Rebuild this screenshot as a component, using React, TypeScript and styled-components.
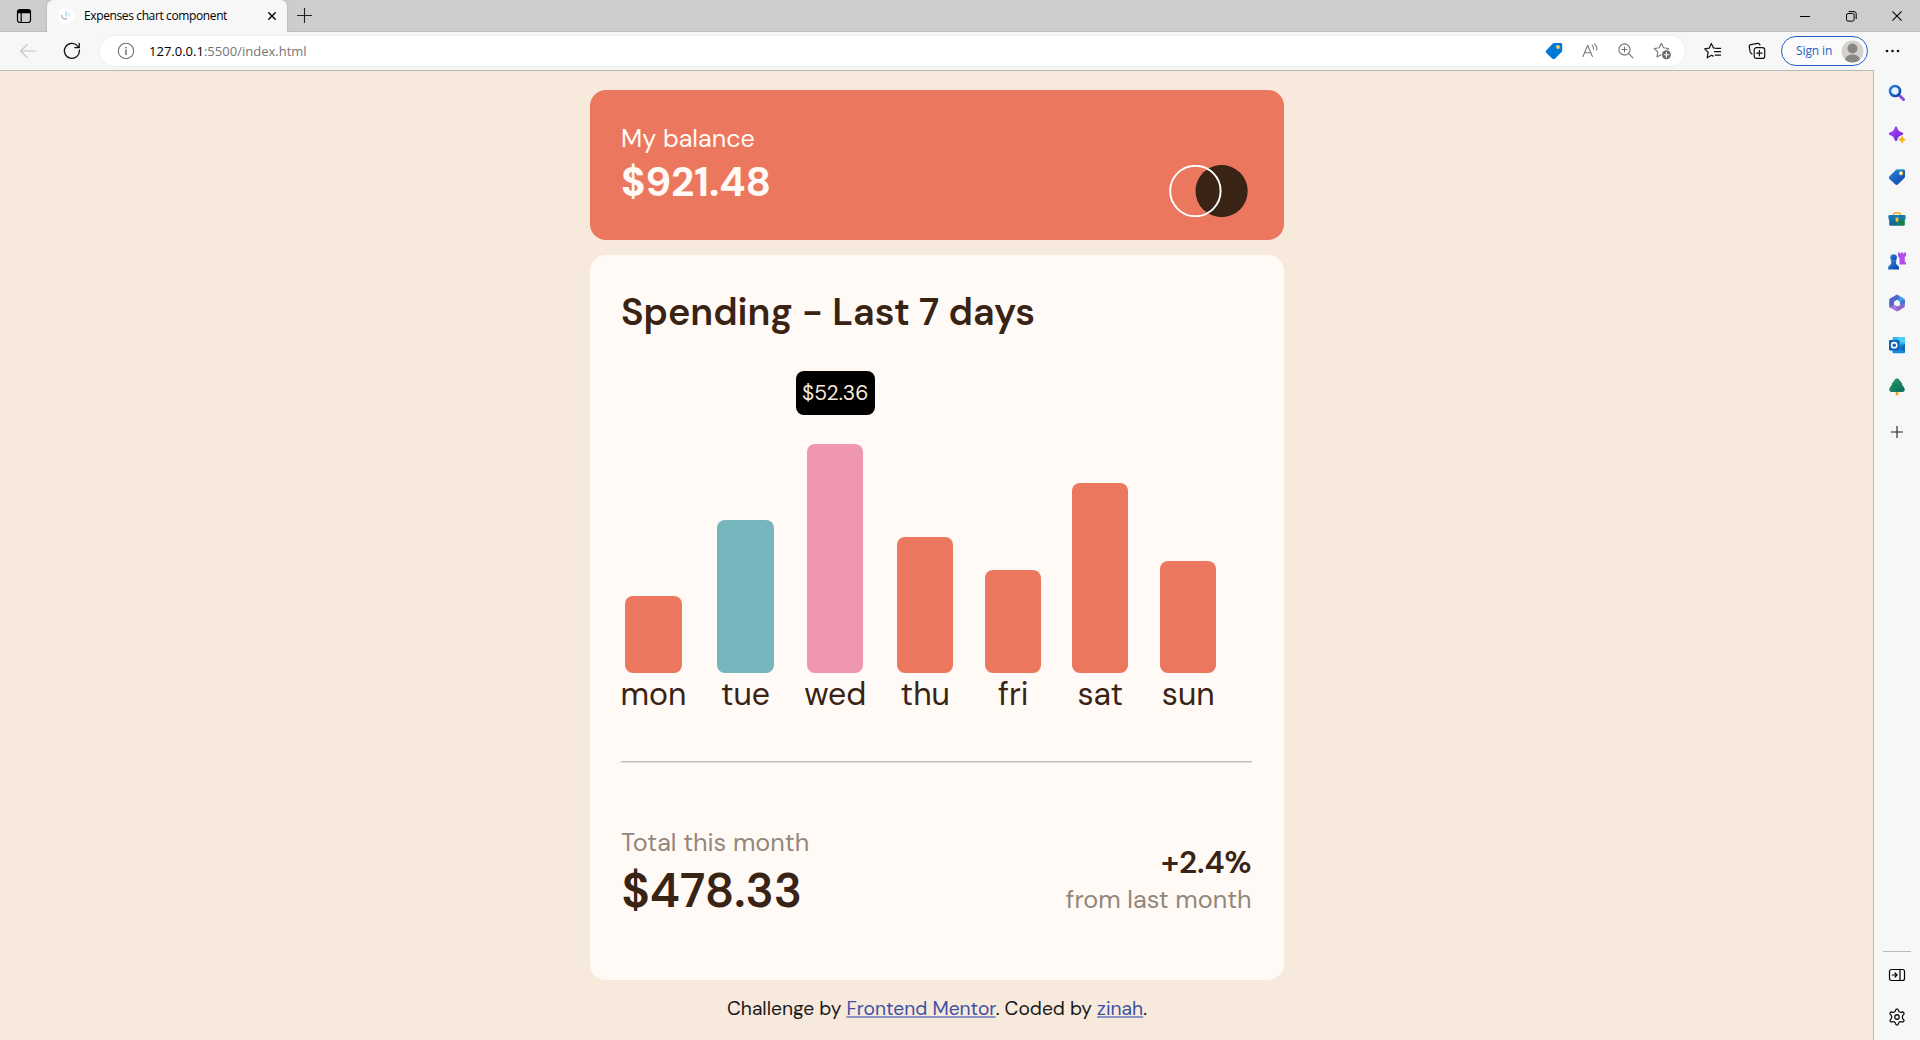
import React from "react";
import styled, { createGlobalStyle } from "styled-components";

const color = {
  orange: "#ec775f",
  cyan: "#76b5bc",
  pink: "#ef97b0",
  dark: "#382314",
  medium: "#93867b",
  cream: "#f7e9dc",
  pale: "#fffaf5",
  link: "#3e52a3",
};

const GlobalStyle = createGlobalStyle`
  *, *::before, *::after { box-sizing: border-box; }
  body { margin: 0; background: ${color.cream}; overflow: hidden; }
  svg { display: block; flex: none; }
`;

/* ---------- Browser frame ---------- */

const Window = styled.div`
  display: flex;
  flex-direction: column;
  width: 1920px;
  height: 1040px;
  font-family: "Open Sans", "Noto Sans", sans-serif;
  color: #111;
`;

const TabStrip = styled.div`
  display: flex;
  height: 32px;
  background: #cdcdcd;
  box-shadow: inset 0 -1px 0 #bdbdbd;
`;

const TabActions = styled.div`
  display: grid;
  place-items: center;
  width: 47px;
  padding: 0 0 0 1px;
`;

const Tab = styled.div`
  display: flex;
  align-items: center;
  width: 240px;
  padding: 0 8px 0 11px;
  background: #f7f7f7;
  border-radius: 6px 6px 0 0;
  box-shadow: 0 0 2px rgba(0, 0, 0, 0.25);
  clip-path: inset(0 -3px 0 -3px);
`;

const Favicon = styled.div`
  display: grid;
  place-items: center;
  width: 16px;
  height: 16px;
  border-radius: 50%;
  background: #fff;
`;

const TabTitle = styled.span`
  flex: 1;
  margin-left: 10px;
  font-size: 12px;
  line-height: 16px;
  letter-spacing: -0.38px;
  color: #000;
  white-space: nowrap;
`;

const IconSlot = styled.div<{ $size?: number }>`
  display: grid;
  place-items: center;
  width: ${(p) => p.$size ?? 32}px;
  height: 30px;
  flex: none;
`;

const WindowControls = styled.div`
  display: flex;
  align-items: center;
  margin-left: auto;
`;

const Toolbar = styled.div`
  display: flex;
  align-items: center;
  gap: 12px;
  height: 38px;
  padding: 0 12px;
  background: #f7f7f7;
`;

const AddressBar = styled.div`
  display: flex;
  align-items: center;
  flex: 1;
  height: 30px;
  padding: 0 5px 0 10px;
  border-radius: 15px;
  background: #fff;
  box-shadow: 0 0 3px rgba(0, 0, 0, 0.07);
`;

const Url = styled.span`
  flex: 1;
  margin-left: 7px;
  font-size: 13px;
  line-height: 18px;
  letter-spacing: 0.01px;
  color: #767676;

  b {
    font-weight: 400;
    color: #000;
  }
`;

const AccountGroup = styled.div`
  display: flex;
  align-items: center;
  gap: 8px;
  margin-left: -4px;
`;

const SignIn = styled.div`
  display: flex;
  align-items: center;
  justify-content: space-between;
  width: 87px;
  height: 30px;
  padding: 0 3px 0 14px;
  border: 1px solid #2260c9;
  border-radius: 15px;
  font-size: 12px;
  line-height: 16px;
  letter-spacing: -0.1px;
  color: #2260c9;
  background: #fbfbfb;
`;

const Body = styled.div`
  display: flex;
  flex: 1;
  background: #f7f7f7;
`;

const Page = styled.main`
  display: flex;
  flex-direction: column;
  align-items: center;
  flex: 1;
  padding: 19px 0 0 1px;
  border-top: 1px solid #b9b9b9;
  border-right: 1px solid #b9b9b9;
  background: ${color.cream};
  font-family: "DM Sans", Inter, sans-serif;
  color: ${color.dark};
`;

const Sidebar = styled.aside`
  display: flex;
  flex-direction: column;
  align-items: center;
  width: 46px;
  padding: 2px 0;
`;

const SidebarSlot = styled.div<{ $height?: number }>`
  display: grid;
  place-items: center;
  width: 46px;
  height: ${(p) => p.$height ?? 42}px;
`;

const SidebarRule = styled.div`
  width: 28px;
  height: 1px;
  margin: auto 0 2px;
  background: #b9b9b9;
`;

/* ---------- Cards ---------- */

const BalanceCard = styled.section`
  display: flex;
  justify-content: space-between;
  width: 694px;
  height: 150px;
  padding: 32.4px 36px 0 31px;
  border-radius: 16px;
  background: ${color.orange};
  color: ${color.pale};
`;

const BalanceLabel = styled.p`
  margin: 0;
  font-size: 25.2px;
  line-height: 34px;
`;

const BalanceValue = styled.p`
  margin: 0;
  font-size: 40.5px;
  font-weight: 700;
  line-height: 54px;
`;

const Logo = styled.svg`
  margin-top: 42.3px;
`;

const SpendingCard = styled.section`
  width: 694px;
  height: 725px;
  margin-top: 15px;
  padding: 34px 32px 0 31px;
  border-radius: 16px;
  background: ${color.pale};
`;

const Title = styled.h1`
  margin: 0;
  font-size: 37.8px;
  font-weight: 600;
  line-height: 48px;
`;

const Chart = styled.div`
  display: flex;
  align-items: flex-end;
  gap: 30.5px;
  height: 378px;
`;

const Day = styled.div<{ $width: number }>`
  display: flex;
  flex-direction: column;
  align-items: center;
  width: ${(p) => p.$width}px;
`;

const Bar = styled.div<{ $height: number; $color: string }>`
  position: relative;
  width: 56.4px;
  height: ${(p) => p.$height}px;
  border-radius: 8px;
  background: ${(p) => p.$color};
`;

const DayLabel = styled.span`
  font-size: 32px;
  line-height: 42px;
`;

const Tooltip = styled.div`
  position: absolute;
  left: 50%;
  top: -73px;
  width: 79.4px;
  height: 44px;
  margin-left: -39.7px;
  border-radius: 8px;
  background: #000;
  color: ${color.cream};
  font-size: 21px;
  line-height: 45px;
  text-align: center;
`;

const Rule = styled.hr`
  height: 2px;
  margin: 46px 0 0;
  border: 0;
  border-top: 1px solid #c2c0be;
  background: #e0dedb;
`;

const Summary = styled.div`
  display: flex;
  align-items: flex-end;
  justify-content: space-between;
  margin-top: 63px;
`;

const Muted = styled.p`
  margin: 0;
  font-size: 25.2px;
  line-height: 34px;
  color: ${color.medium};
`;

const Total = styled.p`
  margin: 0 0 0 0.5px;
  font-size: 47.3px;
  font-weight: 600;
  line-height: 62px;
`;

const Change = styled.div`
  padding: 0 0.5px 4.6px 0;
  text-align: right;
`;

const ChangeValue = styled.p`
  margin: 0;
  font-size: 31.5px;
  font-weight: 600;
  line-height: 40px;
`;

const Attribution = styled.footer`
  margin-top: 15px;
  font-size: 19.25px;
  line-height: 28px;
  color: #1a1a1a;

  a {
    color: ${color.link};
    text-decoration: underline;
    text-decoration-thickness: 1.5px;
    text-underline-offset: 0.5px;
    text-decoration-skip-ink: none;
    text-decoration-color: #8b93c4;
  }
`;

/* ---------- Data ---------- */

type DayData = {
  name: string;
  width: number;
  height: number;
  fill: string;
  amount?: string;
};

const days: DayData[] = [
  { name: "mon", width: 65, height: 77, fill: color.orange },
  { name: "tue", width: 58, height: 153, fill: color.cyan },
  { name: "wed", width: 60.5, height: 229, fill: color.pink, amount: "$52.36" },
  { name: "thu", width: 58.5, height: 136, fill: color.orange },
  { name: "fri", width: 56.5, height: 103, fill: color.orange },
  { name: "sat", width: 56.5, height: 190, fill: color.orange },
  { name: "sun", width: 58.5, height: 112, fill: color.orange },
];

/* ---------- Toolbar icons ---------- */

const line = { fill: "none", strokeLinecap: "round", strokeLinejoin: "round" } as const;

const TabActionsIcon = () => (
  <svg width="16" height="16" viewBox="0 0 16 16" {...line} stroke="#000" strokeWidth="1.2">
    <rect x="1.5" y="1.5" width="13" height="13" rx="2.5" />
    <path d="M2 2.5h12v2.2H2z" fill="#000" />
    <path d="M5.2 5v9" />
  </svg>
);

const FaviconMark = () => (
  <svg width="12" height="12" viewBox="0 0 12 12" {...line} strokeWidth="1.5">
    <path d="M1.6 5.6c.6 2.4 2.6 3.6 4.8 3.2" stroke="#b6b4dd" />
    <path d="M6.2 2v4" stroke="#a9dbe6" />
    <path d="M9.6 3.2 8.4 4.6l1.2 1.2" stroke="#c5e6ee" strokeWidth="1.1" />
  </svg>
);

const CloseIcon = ({ size = 8, weight = 1.4 }: { size?: number; weight?: number }) => (
  <svg width={size} height={size} viewBox="0 0 10 10" stroke="#000" strokeWidth={(weight * 10) / size}>
    <path d="M.4.4l9.2 9.2M9.6.4L.4 9.6" />
  </svg>
);

const PlusIcon = ({ size }: { size: number }) => (
  <svg width={size} height={size} viewBox={`0 0 ${size} ${size}`} stroke="#222" strokeWidth="1.1">
    <path d={`M${size / 2} 0v${size}M0 ${size / 2}h${size}`} />
  </svg>
);

const MinimiseIcon = () => (
  <svg width="10" height="10" viewBox="0 0 10 10" stroke="#000">
    <path d="M0 5.5h10" />
  </svg>
);

const RestoreIcon = () => (
  <svg width="11" height="11" viewBox="0 0 11 11" fill="none" stroke="#000">
    <rect x=".5" y="2.5" width="7.6" height="7.6" rx="1.5" />
    <path d="M2.7.6H8a2.2 2.2 0 0 1 2.2 2.2V8" />
  </svg>
);

const BackIcon = () => (
  <svg width="18" height="16" viewBox="0 0 18 16" {...line} stroke="#c4c4c4" strokeWidth="1.1">
    <path d="M16.5 8H1.6M8.2 1.4L1.6 8l6.6 6.6" />
  </svg>
);

const ReloadIcon = () => (
  <svg width="18" height="18" viewBox="0 0 18 18" {...line} stroke="#111" strokeWidth="1.3">
    <path d="M16.4 8.2A7.5 7.5 0 1 1 14.7 4.1L16 5.4" />
    <path d="M16.2 1.4v4.3h-4.4" />
  </svg>
);

const InfoIcon = () => (
  <svg width="18" height="18" viewBox="0 0 18 18" {...line} stroke="#707070" strokeWidth="1.1">
    <circle cx="9" cy="9" r="7.7" />
    <path d="M9 8v4.5" strokeWidth="1.5" />
    <circle cx="9" cy="5.6" r=".9" fill="#707070" stroke="none" />
  </svg>
);

const ShoppingTagIcon = () => (
  <svg width="18" height="18" viewBox="0 0 18 18">
    <path d="M9.4 1h6.400c.8 0 1.400.6 1.400 1.400v6c0 .6-.2 1.100-.6 1.500l-6.500 6.500c-.9.900-2.100.9-3 0L1.400 11c-.8-.8-.8-2 0-2.800L7.600 1.800C8.100 1.300 8.700 1 9.400 1z" fill="#0078d7" />
    <circle cx="13" cy="5" r="1.900" fill="#ffd94a" />
  </svg>
);

const ReadAloudIcon = () => (
  <svg width="18" height="18" viewBox="0 0 18 18" {...line} stroke="#7a7a7a" strokeWidth="1.1">
    <path d="M2 14.500L6.700 3.200 11.400 14.500M3.700 10.700h6" />
    <path d="M11.200 3.200c1 .9 1.400 2.200 1.300 4M13.500 1.800c1.700 1.500 2.700 3.600 2.200 6.400" />
  </svg>
);

const ZoomInIcon = () => (
  <svg width="18" height="18" viewBox="0 0 18 18" {...line} stroke="#707070" strokeWidth="1.1">
    <circle cx="7.5" cy="7.5" r="5.6" />
    <path d="M11.600 11.600l4.400 4.200M7.500 5v5M5 7.500h5" />
  </svg>
);

const AddFavouriteIcon = () => (
  <svg width="19" height="18" viewBox="0 0 19 18" {...line} stroke="#777" strokeWidth="1.1">
    <path d="M8.400 1.200l2.200 4.600 5 .7-3.600 3.400.9 5-4.500-2.400-4.400 2.400.8-5L1.200 6.500l5-.7z" />
    <circle cx="13.400" cy="12.800" r="5.200" fill="#fff" stroke="none" />
    <circle cx="13.400" cy="12.800" r="4.500" fill="#6b6b6b" stroke="none" />
    <path d="M13.400 10.400v4.800M11 12.800h4.800" stroke="#fff" />
  </svg>
);

const FavouritesIcon = () => (
  <svg width="18" height="18" viewBox="0 0 18 18" {...line} stroke="#111" strokeWidth="1.2">
    <path d="M10.800 6.200l-1.300-.2L7.300 1.600l-2.100 4.600-4.500.7 3.400 3.300-.9 5.600 4.400-2.500 1.500.8" />
    <path d="M11.800 6.300h4.800M10.500 9.700h6.100M11.200 13.100h5.400" />
  </svg>
);

const CollectionsIcon = () => (
  <svg width="18" height="18" viewBox="0 0 18 18" {...line} stroke="#111" strokeWidth="1.2">
    <rect x="6.200" y="5.700" width="10.500" height="10.700" rx="2.200" />
    <path d="M11.400 8.300v5.500M8.650 11.050h5.500" />
    <path d="M3.900 11.900C2.700 11.300 2.300 10.400 2 9.200L1.300 5.100c-.2-1.200.4-2.100 1.600-2.400l6.600-1.300c1.300-.2 2.100.3 2.500 1.600" />
  </svg>
);

const Avatar = () => (
  <svg width="23" height="23" viewBox="0 0 23 23">
    <defs>
      <clipPath id="avatar-disc">
        <circle cx="11.500" cy="11.500" r="11" />
      </clipPath>
    </defs>
    <g clipPath="url(#avatar-disc)">
      <rect width="23" height="23" fill="#d4d2d0" />
      <circle cx="11.500" cy="8.500" r="5" fill="#8a8783" />
      <ellipse cx="11.500" cy="19.200" rx="7.300" ry="4.700" fill="#8a8783" />
    </g>
  </svg>
);

const MoreIcon = () => (
  <svg width="15" height="4" viewBox="0 0 15 4" fill="#111">
    <circle cx="2" cy="2" r="1.350" />
    <circle cx="7.500" cy="2" r="1.350" />
    <circle cx="13" cy="2" r="1.350" />
  </svg>
);

/* ---------- Sidebar icons ---------- */

const SidebarGradients = () => (
  <svg width="0" height="0">
    <defs>
      <linearGradient id="blue" x1="0" y1="0" x2="1" y2="1">
        <stop offset="0" stopColor="#2f86df" />
        <stop offset="1" stopColor="#0a3fa6" />
      </linearGradient>
      <linearGradient id="violet" x1="0" y1="0" x2="1" y2="1">
        <stop offset="0" stopColor="#b14bf0" />
        <stop offset="1" stopColor="#6a20d8" />
      </linearGradient>
      <linearGradient id="case" x1="0" y1="0" x2="1" y2="0">
        <stop offset="0" stopColor="#1263b6" />
        <stop offset="1" stopColor="#12883a" />
      </linearGradient>
      <linearGradient id="tree" x1="0" y1="0" x2="1" y2="1">
        <stop offset="0" stopColor="#27a060" />
        <stop offset="1" stopColor="#0b6a63" />
      </linearGradient>
    </defs>
  </svg>
);

const SearchIcon = () => (
  <svg width="18" height="18" viewBox="0 0 18 18" fill="none">
    <path d="M11.500 11.500l4 4" stroke="#8a45dc" strokeWidth="3" strokeLinecap="round" />
    <circle cx="7" cy="7" r="5" stroke="url(#blue)" strokeWidth="2.600" fill="#e6f3fb" />
  </svg>
);

const DiscoverIcon = () => (
  <svg width="18" height="18" viewBox="0 0 18 18">
    <path d="M8 .4c.7 0 1 .4 1.200 1 .8 3 1.900 4.200 5 5.100.7.200 1.100.600 1.100 1.200s-.4 1-1.100 1.200c-3.100.9-4.200 2.200-5 5.200-.2.700-.5 1.100-1.200 1.100s-1-.4-1.200-1.100c-.8-3-1.900-4.300-5-5.200C1.100 8.700.7 8.300.7 7.700s.4-1 1.100-1.200c3.100-.9 4.200-2.100 5-5.100.2-.600.500-1 1.200-1z" fill="url(#violet)" />
    <path d="M14 10c.4 0 .6.200.7.600.4 1.400.8 1.900 2.300 2.300.4.100.7.300.7.700s-.3.600-.7.700c-1.500.4-1.900.9-2.300 2.400-.1.400-.3.700-.7.700s-.6-.3-.7-.7c-.4-1.500-.8-2-2.300-2.400-.4-.1-.7-.3-.7-.7s.3-.6.700-.7c1.500-.4 1.900-.9 2.300-2.300.1-.4.300-.6.700-.6z" fill="#f7b416" />
  </svg>
);

const TagIcon = () => (
  <svg width="18" height="18" viewBox="0 0 18 18">
    <path d="M9.400 1.400h6.200c.8 0 1.400.6 1.400 1.400v5.600c0 .6-.2 1.100-.6 1.500L10 16.300c-.9.900-2 .9-2.900 0L1.500 11c-.8-.8-.8-2 0-2.800l6-6c.5-.5 1.200-.8 1.900-.8z" fill="url(#blue)" />
    <path d="M8.500 2h7.600" stroke="#29b5c4" strokeWidth="1.100" />
    <circle cx="13" cy="5.300" r="1.700" fill="#fff" stroke="#f7c02c" strokeWidth="1" />
  </svg>
);

const BriefcaseIcon = () => (
  <svg width="18" height="18" viewBox="0 0 18 18">
    <path d="M5.500 5.500V4.300c0-.8.500-1.300 1.300-1.300h4.400c.8 0 1.300.5 1.300 1.300v1.200" fill="none" stroke="#e8a81c" strokeWidth="1.400" />
    <rect x="1.200" y="8" width="15.600" height="7.800" rx="1.200" fill="url(#case)" />
    <rect x=".4" y="5" width="17.200" height="4.400" rx="1" fill="#1879b0" />
    <rect x="7.600" y="7.400" width="2.800" height="4.400" rx="1" fill="#f7c02c" />
  </svg>
);

const GamesIcon = () => (
  <svg width="18" height="18" viewBox="0 0 18 18">
    <path d="M10 .4h1.800v1.200h1.200V.4h2v1.200h1.200V.4H18v3.600l-1.300 1v4.500l1.300 1.300v1.700h-6.500V6L10 4.500z" fill="#b04cf0" />
    <circle cx="5.600" cy="5.600" r="3.300" fill="url(#blue)" />
    <path d="M2.800 8.300h5.600v1.500H7.800c.1 1.800.7 2.900 1.900 3.700.9.600 1.300 1.200 1.300 2.300v1.700H.200v-1.700c0-1.100.4-1.700 1.300-2.300 1.200-.8 1.800-1.900 1.900-3.700H2.800z" fill="url(#blue)" />
  </svg>
);

const OfficeIcon = () => (
  <svg width="18" height="18" viewBox="0 0 18 18">
    <path d="M9 .4l7 4c.5.300.8.800.8 1.400V9L12 10 9 5.300 5.200 7.500z" fill="#3aa0e6" />
    <path d="M9 .4L2 4.400c-.5.300-.8.800-.8 1.400v6.400c0 .6.300 1.100.8 1.400l4 1.200V8.500L9 6.300l2.500-2.200z" fill="#5464c8" />
    <path d="M1.500 13.200l6.500 3.900c.6.400 1.400.4 2 0l3.500-2.200L10 12l-4-1z" fill="#a877dc" />
    <path d="M16.800 5.800v6.400c0 .6-.3 1.100-.8 1.400l-6 3.500-2-3.600 4.400-2.400V7z" fill="#8a68cc" />
    <path d="M16.800 5.800L12.400 7v4l4.400-1.500z" fill="#3b78d8" />
    <path d="M9 5.900l2.800 1.600v3L9 12.100l-2.800-1.600v-3z" fill="#f7f7f7" />
  </svg>
);

const OutlookIcon = () => (
  <svg width="18" height="18" viewBox="0 0 18 18">
    <rect x="4.500" y="1" width="12.500" height="9" rx="1" fill="#37b5ee" />
    <path d="M10 1h6a1 1 0 0 1 1 1v4h-7z" fill="#50d0f8" />
    <path d="M4.500 9L17 8v8.200a1 1 0 0 1-1 1H5.500a1 1 0 0 1-1-1z" fill="#1a8bd8" />
    <path d="M17 8.500v7.700l-6-4z" fill="#1169bd" />
    <rect x="1" y="4" width="10.500" height="10.500" rx="1" fill="#0a64b8" />
    <circle cx="6.200" cy="9.200" r="2.600" fill="none" stroke="#fff" strokeWidth="1.600" />
  </svg>
);

const TreeIcon = () => (
  <svg width="18" height="18" viewBox="0 0 18 18">
    <rect x="7.700" y="12.500" width="2.600" height="4.900" rx=".8" fill="#f2a516" />
    <path d="M9 .6c1 0 1.700.5 2.400 1.300l2.200 2.800c.6.800.6 1.500.4 2 1.200 1.100 2 2.400 2.500 3.600.8 2-.2 3.800-2.300 3.800H3.800c-2.100 0-3.100-1.800-2.300-3.800.5-1.200 1.300-2.500 2.500-3.600-.2-.5-.2-1.200.4-2l2.200-2.800C7.300 1.100 8 .6 9 .6z" fill="url(#tree)" />
    <path d="M4 7.200c2 1 4 .4 5.200-1M8.500 11.500c2 .7 4.400 0 5.600-1.800" fill="none" stroke="#0b6a50" strokeWidth=".8" />
  </svg>
);

const PanelIcon = () => (
  <svg width="18" height="14" viewBox="0 0 18 14" {...line} stroke="#000" strokeWidth="1.2">
    <rect x="1.500" y="1.500" width="15" height="11" rx="2" />
    <path d="M12 1.500v11M4.200 7h4.800M7 5l2 2-2 2" />
  </svg>
);

const SettingsIcon = () => (
  <svg width="18" height="18" viewBox="0 0 24 24" {...line} stroke="#111" strokeWidth="1.700">
    <path d="M9.700 4.200c.3-1.500.6-2.900 2.300-2.900s2 1.400 2.300 2.900c.8 1.200 1.700 1.700 3 1.500 1.500-.5 2.900-.9 3.800.6s-.2 2.500-1.400 3.500c-.7 1.400-.7 3 0 4.400 1.200 1 2.300 2 1.400 3.500s-2.300 1.100-3.800.6c-1.300-.2-2.200.3-3 1.500-.3 1.500-.6 2.900-2.300 2.900s-2-1.400-2.300-2.900c-.8-1.200-1.700-1.700-3-1.500-1.500.5-2.900.9-3.800-.6s.2-2.500 1.400-3.500c.7-1.400.7-3 0-4.400-1.200-1-2.300-2-1.400-3.500s2.300-1.100 3.800-.6c1.300.2 2.200-.3 3-1.500z" />
    <circle cx="12" cy="12" r="3" />
  </svg>
);

const sidebarIcons = [
  SearchIcon,
  DiscoverIcon,
  TagIcon,
  BriefcaseIcon,
  GamesIcon,
  OfficeIcon,
  OutlookIcon,
  TreeIcon,
];

/* ---------- App ---------- */

export default function App() {
  return (
    <Window>
      <GlobalStyle />
      <TabStrip>
        <TabActions>
          <TabActionsIcon />
        </TabActions>
        <Tab>
          <Favicon>
            <FaviconMark />
          </Favicon>
          <TabTitle>Expenses chart component</TabTitle>
          <IconSlot $size={14}>
            <CloseIcon />
          </IconSlot>
        </Tab>
        <IconSlot $size={35}>
          <PlusIcon size={15} />
        </IconSlot>
        <WindowControls>
          <IconSlot $size={46}>
            <MinimiseIcon />
          </IconSlot>
          <IconSlot $size={46}>
            <RestoreIcon />
          </IconSlot>
          <IconSlot $size={46}>
            <CloseIcon size={10} weight={1.1} />
          </IconSlot>
        </WindowControls>
      </TabStrip>

      <Toolbar>
        <IconSlot>
          <BackIcon />
        </IconSlot>
        <IconSlot>
          <ReloadIcon />
        </IconSlot>
        <AddressBar>
          <IconSlot>
            <InfoIcon />
          </IconSlot>
          <Url>
            <b>127.0.0.1</b>:5500/index.html
          </Url>
          <IconSlot $size={36}>
            <ShoppingTagIcon />
          </IconSlot>
          <IconSlot $size={36}>
            <ReadAloudIcon />
          </IconSlot>
          <IconSlot $size={36}>
            <ZoomInIcon />
          </IconSlot>
          <IconSlot $size={36}>
            <AddFavouriteIcon />
          </IconSlot>
        </AddressBar>
        <IconSlot>
          <FavouritesIcon />
        </IconSlot>
        <IconSlot>
          <CollectionsIcon />
        </IconSlot>
        <AccountGroup>
          <SignIn>
            Sign in
            <Avatar />
          </SignIn>
          <IconSlot>
            <MoreIcon />
          </IconSlot>
        </AccountGroup>
      </Toolbar>

      <Body>
        <Page>
          <BalanceCard>
            <div>
              <BalanceLabel>My balance</BalanceLabel>
              <BalanceValue>$921.48</BalanceValue>
            </div>
            <Logo width="79" height="52" viewBox="0 0 79 52">
              <circle cx="52.600" cy="26" r="26.100" fill={color.dark} />
              <circle cx="26.400" cy="26" r="25.200" fill="none" stroke="#fff" strokeWidth="1.900" />
            </Logo>
          </BalanceCard>

          <SpendingCard>
            <Title>Spending - Last 7 days</Title>
            <Chart>
              {days.map((day) => (
                <Day key={day.name} $width={day.width}>
                  <Bar $height={day.height} $color={day.fill}>
                    {day.amount && <Tooltip>{day.amount}</Tooltip>}
                  </Bar>
                  <DayLabel>{day.name}</DayLabel>
                </Day>
              ))}
            </Chart>
            <Rule />
            <Summary>
              <div>
                <Muted>Total this month</Muted>
                <Total>$478.33</Total>
              </div>
              <Change>
                <ChangeValue>+2.4%</ChangeValue>
                <Muted>from last month</Muted>
              </Change>
            </Summary>
          </SpendingCard>

          <Attribution>
            Challenge by <a>Frontend Mentor</a>. Coded by <a>zinah</a>.
          </Attribution>
        </Page>

        <Sidebar>
          {sidebarIcons.map((Icon, index) => (
            <SidebarSlot key={index}>
              <Icon />
            </SidebarSlot>
          ))}
          <SidebarSlot $height={48}>
            <PlusIcon size={12} />
          </SidebarSlot>
          <SidebarRule />
          <SidebarSlot>
            <PanelIcon />
          </SidebarSlot>
          <SidebarSlot>
            <SettingsIcon />
          </SidebarSlot>
          <SidebarGradients />
        </Sidebar>
      </Body>
    </Window>
  );
}
